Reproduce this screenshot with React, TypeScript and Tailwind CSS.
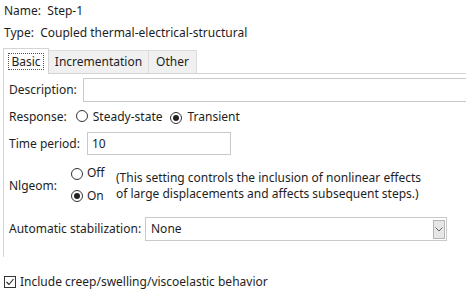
import React from "react";

function Radio({ checked }: { checked?: boolean }) {
  return (
    <span className="inline-flex w-[12px] h-[12px] rounded-full border border-[#333] bg-white items-center justify-center shrink-0">
      {checked && <span className="w-[6px] h-[6px] rounded-full bg-[#222]" />}
    </span>
  );
}

export default function App() {
  return (
    <div
      className="w-[466px] h-[296px] bg-white overflow-hidden text-[12px] text-[#1e1e1e] leading-none"
      style={{ fontFamily: '"Noto Sans", "Open Sans", sans-serif' }}
    >
      <div className="h-[22px] pl-[4px] flex items-center">Name:&nbsp; Step-1</div>
      <div className="h-[22px] pl-[4px] flex items-center">Type:&nbsp; Coupled thermal-electrical-structural</div>

      {/* tabs */}
      <div className="h-[29px] flex items-end pl-[3px]">
        <div className="h-[26px] w-[46px] bg-white border border-b-0 border-[#d4d4d4] flex items-center justify-center relative top-[1px] z-10">
          <span className="border border-dotted border-[#555] px-[2px] h-[17px] flex items-center">Basic</span>
        </div>
        <div className="h-[23px] w-[100px] bg-[#f0f0f0] border-t border-r border-[#dcdcdc] flex items-center justify-center">
          Incrementation
        </div>
        <div className="h-[23px] w-[48px] bg-[#f0f0f0] border-t border-r border-[#dcdcdc] flex items-center justify-center">
          Other
        </div>
      </div>

      {/* panel */}
      <div className="ml-[3px] border-l border-t border-[#d4d4d4] h-[184px] pl-[5px] pt-[4px] flex flex-col">
        <div className="h-[24px] flex items-center">
          <span className="w-[74px]">Description:</span>
          <div className="flex-1 h-[24px] border border-[#c9c9c9] -mr-[4px]" />
        </div>
        <div className="h-[30px] flex items-center">
          <span>Response:</span>
          <span className="ml-[9px]"><Radio /></span>
          <span className="ml-[5px]">Steady-state</span>
          <span className="ml-[8px]"><Radio checked /></span>
          <span className="ml-[5px]">Transient</span>
        </div>
        <div className="h-[23px] flex items-center">
          <span className="w-[78px]">Time period:</span>
          <div className="w-[144px] h-[23px] border border-[#c9c9c9] flex items-center pl-[4px]">10</div>
        </div>
        <div className="h-[8px]" />
        <div className="h-[44px] flex items-center">
          <span className="w-[62px] shrink-0 pt-[2px]">Nlgeom:</span>
          <div className="flex flex-col gap-[8px] w-[45px] shrink-0">
            <div className="flex items-center gap-[4px] h-[14px]">
              <Radio />
              <span className="relative -top-[1px]">Off</span>
            </div>
            <div className="flex items-center gap-[4px] h-[14px]">
              <Radio checked />
              <span>On</span>
            </div>
          </div>
          <div className="leading-[16px] pt-[1px] whitespace-nowrap">
            (This setting controls the inclusion of nonlinear effects
            <br />
            of large displacements and affects subsequent steps.)
          </div>
        </div>
        <div className="h-[10px]" />
        <div className="h-[24px] flex items-center">
          <span className="w-[136px]">Automatic stabilization:</span>
          <div className="w-[302px] h-[24px] border border-[#c9c9c9] flex items-center justify-between pl-[5px] pr-[1px]">
            <span>None</span>
            <span className="w-[12px] h-[19px] bg-[#e6e6e6] border border-[#b5b5b5] flex items-center justify-center">
              <svg width="8" height="5" viewBox="0 0 8 5">
                <path d="M0.5 0.5 L4 4 L7.5 0.5" fill="none" stroke="#666" strokeWidth="1" />
              </svg>
            </span>
          </div>
        </div>
      </div>

      <div className="mt-[12px] h-[26px] pl-[4px] flex items-center gap-[4px]">
        <span className="w-[12px] h-[12px] border border-[#333] flex items-center justify-center bg-white">
          <svg width="10" height="10" viewBox="0 0 10 10">
            <path d="M1.5 5 L4 7.5 L8.5 2" fill="none" stroke="#222" strokeWidth="1.1" />
          </svg>
        </span>
        <span>Include creep/swelling/viscoelastic behavior</span>
      </div>
    </div>
  );
}
